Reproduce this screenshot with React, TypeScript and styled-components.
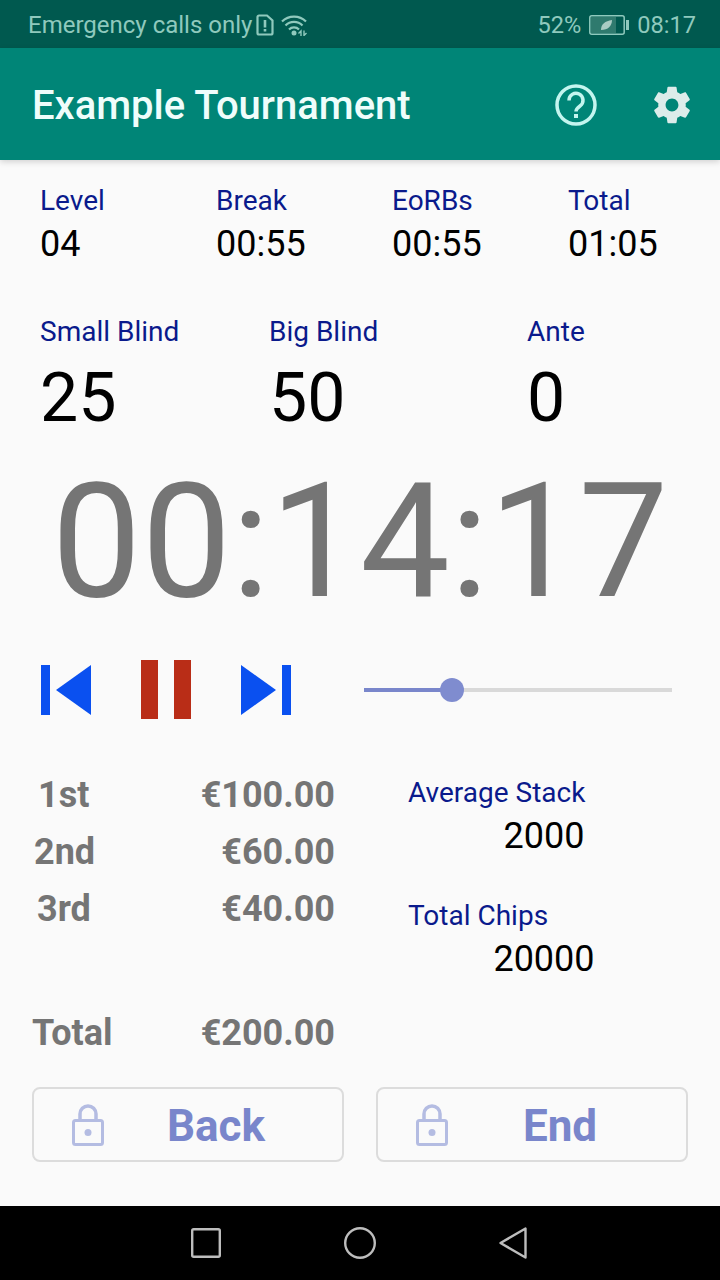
import React from 'react';
import styled, { createGlobalStyle } from 'styled-components';

const GlobalStyle = createGlobalStyle`
  html, body {
    margin: 0;
    padding: 0;
    background: #fafafa;
    font-family: Roboto, "Liberation Sans", sans-serif;
  }
`;

const Screen = styled.div`
  width: 720px;
  height: 1280px;
  display: flex;
  flex-direction: column;
  overflow: hidden;
  background: #fafafa;
`;

const StatusBar = styled.div`
  height: 48px;
  flex: none;
  display: flex;
  align-items: center;
  justify-content: space-between;
  box-sizing: border-box;
  padding: 1px 24px 0 28px;
  background: #00594f;
  color: #8fc9bd;
  font-size: 24px;
`;

const StatusGroup = styled.div<{ $size?: number }>`
  display: flex;
  align-items: center;
  font-size: ${p => p.$size ?? 24}px;
`;

const AppBar = styled.div`
  height: 112px;
  flex: none;
  display: flex;
  align-items: center;
  box-sizing: border-box;
  padding: 2px 26px 0 32px;
  background: #008577;
  box-shadow: 0 2px 6px rgba(0, 0, 0, 0.16);
`;

const Title = styled.h1`
  flex: 1;
  margin: 0;
  color: #effdfb;
  font-size: 40px;
  font-weight: 500;
`;

const Content = styled.div`
  flex: 1;
  display: flex;
  flex-direction: column;
`;

const StatsRow = styled.div`
  display: grid;
  grid-template-columns: repeat(4, 176px);
  padding: 25px 0 0 40px;
`;

const Label = styled.div`
  color: #0a1a8c;
  font-size: 28px;
  line-height: 32px;
`;

const StatValue = styled.div`
  margin-top: 5px;
  color: #000;
  font-size: 36px;
  line-height: 44px;
`;

const BlindsRow = styled.div`
  display: grid;
  grid-template-columns: 229px 258px 1fr;
  padding: 50px 0 0 40px;
`;

const BlindValue = styled.div`
  margin-top: 11px;
  color: #000;
  font-size: 68px;
  line-height: 78px;
`;

const Clock = styled.div`
  height: 190px;
  padding-top: 10px;
  color: #757575;
  font-size: 160px;
  line-height: 190px;
  text-align: center;
`;

const Controls = styled.div`
  display: flex;
  align-items: center;
  height: 64px;
  margin-top: 21px;
  padding: 0 48px 0 41px;
`;

const TransportIcon = styled.svg<{ $gap?: number }>`
  flex: none;
  display: block;
  margin-right: ${p => p.$gap ?? 0}px;
`;

const Slider = styled.div`
  flex: 1;
  height: 4px;
  position: relative;
  background: #d9d9d9;
`;

const SliderFill = styled.div`
  height: 100%;
  background: #7986cb;
`;

const SliderThumb = styled.div`
  position: absolute;
  top: -10px;
  width: 24px;
  height: 24px;
  margin-left: -12px;
  border-radius: 50%;
  background: #7f8ccf;
`;

const InfoArea = styled.div`
  display: flex;
  padding-top: 45px;
`;

const Prizes = styled.div`
  width: 335px;
  flex: none;
  padding-left: 32px;
  box-sizing: border-box;
`;

const PrizeRow = styled.div<{ $spaced?: boolean }>`
  display: flex;
  justify-content: space-between;
  height: 57px;
  margin-top: ${p => (p.$spaced ? '67px' : '0')};
  color: #757575;
  font-size: 36px;
  font-weight: 700;
  line-height: 57px;
`;

const PrizePlace = styled.span<{ $indent: number }>`
  padding-left: ${p => p.$indent}px;
`;

const StackColumn = styled.div`
  padding: 10px 0 0 73px;
  flex: 1;
`;

const StackValue = styled.div`
  width: 272px;
  margin: 5px 0 42px;
  color: #000;
  font-size: 36px;
  line-height: 44px;
  text-align: center;
`;

const Buttons = styled.div`
  display: flex;
  gap: 32px;
  padding: 25px 32px 0;
`;

const LockButton = styled.button`
  flex: 1;
  height: 75px;
  display: flex;
  align-items: center;
  padding: 0 0 0 38px;
  box-sizing: border-box;
  background: transparent;
  border: 2px solid #dcdcdc;
  border-radius: 8px;
  color: #7986cb;
  font-family: inherit;
  font-size: 44px;
  font-weight: 700;
`;

const ButtonLabel = styled.span`
  flex: 1;
  padding: 3px 14px 0 0;
  text-align: center;
`;

const NavBar = styled.div`
  height: 74px;
  flex: none;
  display: flex;
  align-items: center;
  justify-content: center;
  gap: 123px;
  box-sizing: border-box;
  padding-right: 2px;
  background: #000;
`;

const Lock = () => (
  <svg width="32" height="42" viewBox="0 0 32 42" fill="none">
    <path d="M8 17V10a8 8 0 0 1 16 0v7" stroke="#b4bce2" strokeWidth="3.5" />
    <rect x="1.500" y="16.500" width="29" height="24" rx="2" stroke="#b4bce2" strokeWidth="3" />
    <circle cx="16" cy="28.500" r="3.500" fill="#b4bce2" />
  </svg>
);

export default function App() {
  return (
    <Screen>
      <GlobalStyle />
      <StatusBar>
        <StatusGroup>
          Emergency calls only
          <svg width="18" height="22" viewBox="0 0 18 22" fill="none" style={{ marginLeft: 4 }}>
            <path d="M1.500 3a1.500 1.500 0 0 1 1.500-1.500h8l5.500 5V19a1.500 1.500 0 0 1-1.500 1.500H3A1.500 1.500 0 0 1 1.500 19z" stroke="#8fc9bd" strokeWidth="2.200" />
            <path d="M9 6v7.500M9 15v2.500" stroke="#8fc9bd" strokeWidth="2.600" />
          </svg>
          <svg width="27" height="22" viewBox="0 0 27 22" fill="none" style={{ marginLeft: 7 }}>
            <path d="M1 7.500a17 17 0 0 1 24 0M4.500 11.500a12 12 0 0 1 17 0M8 15.500a7 7 0 0 1 10 0" stroke="#8fc9bd" strokeWidth="2.200" />
            <circle cx="13" cy="19" r="2.500" fill="#8fc9bd" />
            <path d="M20 22v-5l-2.500 2.500M23 16.500v5l2.500-2.500" stroke="#8fc9bd" strokeWidth="1.400" />
          </svg>
        </StatusGroup>
        <StatusGroup $size={23.6}>
          52%
          <svg width="40" height="20" viewBox="0 0 40 20" fill="none" style={{ margin: '0 8px' }}>
            <rect x="0.800" y="0.800" width="34.400" height="18.400" rx="2" stroke="#8fc9bd" strokeWidth="1.500" />
            <rect x="2" y="2" width="25" height="16" fill="#2f7a6e" />
            <rect x="37" y="5" width="3" height="10" fill="#8fc9bd" />
            <path d="M12 15c0-6 4-9 11-10 0 6-4 10-11 10z" fill="#a9cbc3" />
          </svg>
          08:17
        </StatusGroup>
      </StatusBar>

      <AppBar>
        <Title>Example Tournament</Title>
        <svg width="42" height="42" viewBox="0 0 42 42" fill="none" style={{ marginRight: 53 }}>
          <circle cx="21" cy="21" r="19" stroke="#c4f5ef" strokeWidth="3.500" />
          <path d="M14 16.500a7 7 0 1 1 11 5.500c-2.500 1.800-4 3-4 5.500" stroke="#c4f5ef" strokeWidth="3.500" />
          <rect x="19" y="30" width="4" height="4" fill="#c4f5ef" />
        </svg>
        <svg width="44" height="44" viewBox="0 0 24 24" fill="#dcecea">
          <path d="M19.430 12.980c.040-.320.070-.640.070-.980s-.030-.660-.070-.980l2.110-1.650c.190-.150.240-.420.120-.640l-2-3.460c-.120-.220-.390-.300-.610-.220l-2.490 1c-.520-.400-1.080-.730-1.690-.980l-.380-2.650C14.460 2.180 14.250 2 14 2h-4c-.250 0-.460.180-.490.420l-.380 2.650c-.610.250-1.170.590-1.690.980l-2.490-1c-.230-.090-.490 0-.610.220l-2 3.460c-.130.220-.070.490.120.640l2.110 1.650c-.040.320-.070.650-.070.980s.030.660.070.980l-2.110 1.650c-.190.150-.240.420-.120.640l2 3.460c.120.220.390.300.610.220l2.490-1c.520.400 1.080.730 1.690.980l.380 2.650c.030.240.240.420.490.420h4c.250 0 .460-.180.490-.420l.380-2.650c.610-.250 1.170-.590 1.690-.980l2.490 1c.230.090.490 0 .610-.220l2-3.460c.120-.220.070-.490-.120-.640l-2.110-1.650zM12 15.500c-1.930 0-3.500-1.570-3.500-3.500s1.570-3.500 3.500-3.500 3.500 1.570 3.500 3.500-1.570 3.500-3.500 3.500z" />
        </svg>
      </AppBar>

      <Content>
        <StatsRow>
          <div><Label>Level</Label><StatValue>04</StatValue></div>
          <div><Label>Break</Label><StatValue>00:55</StatValue></div>
          <div><Label>EoRBs</Label><StatValue>00:55</StatValue></div>
          <div><Label>Total</Label><StatValue>01:05</StatValue></div>
        </StatsRow>

        <BlindsRow>
          <div><Label>Small Blind</Label><BlindValue>25</BlindValue></div>
          <div><Label>Big Blind</Label><BlindValue>50</BlindValue></div>
          <div><Label>Ante</Label><BlindValue>0</BlindValue></div>
        </BlindsRow>

        <Clock>00:14:17</Clock>

        <Controls>
          <TransportIcon width="50" height="52" viewBox="0 0 50 52" $gap={50} fill="#0a50f0">
            <rect x="0" y="1" width="9" height="50" />
            <path d="M50 1v50L15 26z" />
          </TransportIcon>
          <TransportIcon width="50" height="60" viewBox="0 0 50 60" $gap={50} fill="#b92d17">
            <rect x="0" y="0" width="17" height="59" />
            <rect x="33" y="0" width="17" height="59" />
          </TransportIcon>
          <TransportIcon width="50" height="52" viewBox="0 0 50 52" $gap={73} fill="#0a50f0">
            <path d="M0 1v50L35 26z" />
            <rect x="41" y="1" width="9" height="50" />
          </TransportIcon>
          <Slider>
            <SliderFill style={{ width: `${(88 / 308) * 100}%` }} />
            <SliderThumb style={{ left: `${(88 / 308) * 100}%` }} />
          </Slider>
        </Controls>

        <InfoArea>
          <Prizes>
            <PrizeRow><PrizePlace $indent={6}>1st</PrizePlace><span>€100.00</span></PrizeRow>
            <PrizeRow><PrizePlace $indent={2}>2nd</PrizePlace><span>€60.00</span></PrizeRow>
            <PrizeRow><PrizePlace $indent={5}>3rd</PrizePlace><span>€40.00</span></PrizeRow>
            <PrizeRow $spaced><PrizePlace $indent={0}>Total</PrizePlace><span>€200.00</span></PrizeRow>
          </Prizes>
          <StackColumn>
            <Label>Average Stack</Label>
            <StackValue>2000</StackValue>
            <Label>Total Chips</Label>
            <StackValue>20000</StackValue>
          </StackColumn>
        </InfoArea>

        <Buttons>
          <LockButton><Lock /><ButtonLabel>Back</ButtonLabel></LockButton>
          <LockButton><Lock /><ButtonLabel>End</ButtonLabel></LockButton>
        </Buttons>
      </Content>

      <NavBar>
        <svg width="30" height="30" viewBox="0 0 30 30" fill="none">
          <rect x="1.200" y="1.200" width="27.600" height="27.600" rx="1.500" stroke="#bdbdbd" strokeWidth="2.400" />
        </svg>
        <svg width="32" height="32" viewBox="0 0 32 32" fill="none">
          <circle cx="16" cy="16" r="14.800" stroke="#bdbdbd" strokeWidth="2.400" />
        </svg>
        <svg width="28" height="32" viewBox="0 0 28 32" fill="none">
          <path d="M26.500 1.500v29L1.500 16z" stroke="#bdbdbd" strokeWidth="2.400" strokeLinejoin="round" />
        </svg>
      </NavBar>
    </Screen>
  );
}
